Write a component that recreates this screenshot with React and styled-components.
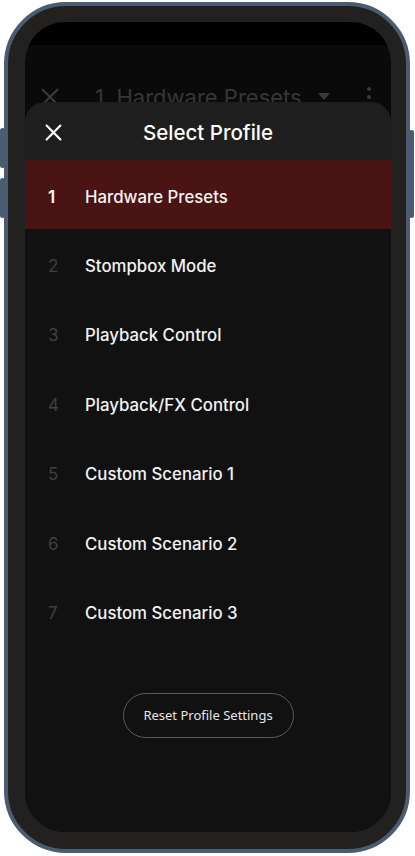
import React from "react";
import styled, { createGlobalStyle } from "styled-components";

const profiles = [
  "Hardware Presets",
  "Stompbox Mode",
  "Playback Control",
  "Playback/FX Control",
  "Custom Scenario 1",
  "Custom Scenario 2",
  "Custom Scenario 3",
];

const CloseIcon = ({ size = 16, color = "#fff", stroke = 2 }) => (
  <svg width={size} height={size} viewBox="0 0 16 16" fill="none">
    <path d="M1.5 1.5 L14.5 14.5 M14.5 1.5 L1.5 14.5" stroke={color} strokeWidth={stroke} strokeLinecap="round" />
  </svg>
);

const App = () => {
  return (
    <>
      <GlobalStyle />
      <Phone>
        <SideButton side="left" top={128} height={40} />
        <SideButton side="left" top={178} height={40} />
        <SideButton side="right" top={130} height={88} />
        <Screen>
          <AppBar>
            <CloseIcon size={18} color="#3a3a3a" stroke={2} />
            <AppTitle>1. Hardware Presets</AppTitle>
            <Caret />
            <Dots>
              <span />
              <span />
              <span />
            </Dots>
          </AppBar>
          <Sheet>
            <SheetHeader>
              <CloseButton>
                <CloseIcon size={17} />
              </CloseButton>
              <SheetTitle>Select Profile</SheetTitle>
            </SheetHeader>
            <List>
              {profiles.map((name, i) => (
                <Row key={name} active={i === 0}>
                  <Num active={i === 0}>{i + 1}</Num>
                  <Label>{name}</Label>
                </Row>
              ))}
            </List>
            <Footer>
              <ResetButton>Reset Profile Settings</ResetButton>
            </Footer>
          </Sheet>
        </Screen>
      </Phone>
    </>
  );
};

const GlobalStyle = createGlobalStyle`
  html, body {
    margin: 0;
    padding: 0;
    background: #ffffff;
  }
  body {
    font-family: Inter, "Noto Sans", sans-serif;
  }
`;

const Phone = styled.div`
  position: relative;
  box-sizing: border-box;
  width: 406px;
  height: 851px;
  margin: 2px 0 0 4px;
  padding: 16px 15px 17px 17px;
  border: 4px solid #4a5c6f;
  border-radius: 62px;
  background: #232120;
  display: flex;
`;

const SideButton = styled.div`
  position: absolute;
  top: ${(p) => p.top - 6}px;
  ${(p) => (p.side === "left" ? "left: -8px;" : "right: -8px;")}
  width: 5px;
  height: ${(p) => p.height}px;
  background: #4a5c6f;
  border-radius: 3px;
`;

const Screen = styled.div`
  flex: 1;
  display: flex;
  flex-direction: column;
  border-radius: 40px;
  overflow: hidden;
  background: linear-gradient(#000 0, #000 23px, #0a0a0a 23px);
`;

const AppBar = styled.div`
  height: 80px;
  flex-shrink: 0;
  box-sizing: border-box;
  padding: 62px 20px 0 16px;
  display: flex;
  align-items: flex-start;
  & > svg {
    margin-top: 4px;
  }
`;

const AppTitle = styled.div`
  margin-left: 36px;
  font-size: 22px;
  line-height: 26px;
  color: #363636;
  font-weight: 400;
  white-space: nowrap;
`;

const Caret = styled.div`
  margin: 9px 0 0 16px;
  width: 0;
  height: 0;
  border-left: 6px solid transparent;
  border-right: 6px solid transparent;
  border-top: 7px solid #3a3a3a;
`;

const Dots = styled.div`
  margin-left: auto;
  margin-top: 3px;
  display: flex;
  flex-direction: column;
  gap: 4px;
  span {
    width: 4px;
    height: 4px;
    border-radius: 50%;
    background: #3a3a3a;
  }
`;

const Sheet = styled.div`
  position: relative;
  flex: 1;
  display: flex;
  flex-direction: column;
  background: #111111;
  border-radius: 20px 20px 0 0;
  overflow: hidden;
`;

const SheetHeader = styled.div`
  position: relative;
  height: 58px;
  flex-shrink: 0;
  background: #1e1e1e;
  display: flex;
  align-items: center;
  justify-content: center;
`;

const CloseButton = styled.div`
  position: absolute;
  left: 20px;
  top: 22px;
  display: flex;
`;

const SheetTitle = styled.div`
  font-size: 20.5px;
  font-weight: 500;
  color: #ffffff;
  margin-top: 3px;
`;

const List = styled.div`
  display: flex;
  flex-direction: column;
`;

const Row = styled.div`
  height: 69.4px;
  box-sizing: border-box;
  padding: 4px 0 0 23px;
  display: flex;
  align-items: center;
  background: ${(p) => (p.active ? "#4a1414" : "transparent")};
`;

const Num = styled.div`
  width: 37px;
  font-size: 17px;
  font-weight: ${(p) => (p.active ? 600 : 400)};
  color: ${(p) => (p.active ? "#ffffff" : "#404040")};
`;

const Label = styled.div`
  font-size: 16.8px;
  font-weight: 500;
  color: #f2f2f2;
`;

const Footer = styled.div`
  display: flex;
  justify-content: center;
  padding-top: 47px;
`;

const ResetButton = styled.button`
  width: 171px;
  height: 45px;
  border: 1px solid #5a5a5a;
  border-radius: 23px;
  background: transparent;
  color: #e6e6e6;
  font-family: "Noto Sans", sans-serif;
  font-size: 13px;
  padding: 0;
`;

export default App;
